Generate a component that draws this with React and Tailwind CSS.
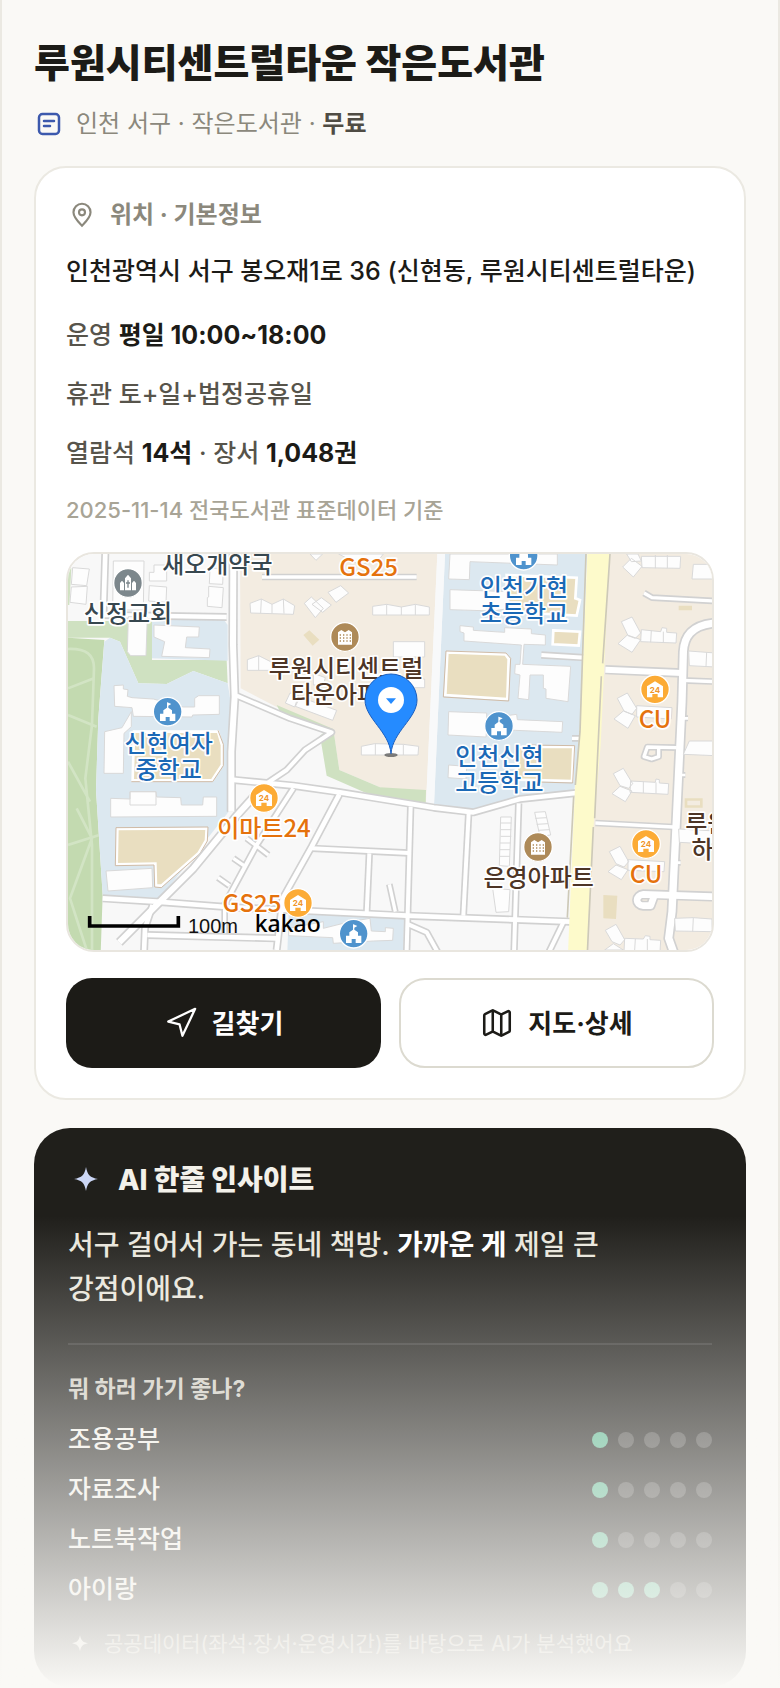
import { Map, Navigation } from 'lucide-react';

const purposes = [
  { name: '조용공부', score: 1 },
  { name: '자료조사', score: 1 },
  { name: '노트북작업', score: 1 },
  { name: '아이랑', score: 3 },
];

const roads = [
  { w: 14, d: 'M136 20 L130 215' },
  { w: 14, d: 'M130 210 L500 216' },
  { w: 18, d: 'M520 20 L519 300 L524 455 L514 620 L514 800' },
  { w: 10, d: 'M606 96 L1070 96' },
  { w: 12, d: 'M530 452 L690 520 L815 562 L735 615 L680 675 L610 722' },
  { w: 14, d: 'M514 704 L700 722 L840 742 L1122 788 L1240 802 L1380 762 L1548 744' },
  { w: 18, d: 'M604 730 L530 812 L400 970 L300 1070 L178 1192' },
  { w: 12, d: 'M700 730 L590 900 L492 1082' },
  { w: 10, d: 'M560 880 L625 930 M520 940 L552 962 M474 998 L508 1022' },
  { w: 14, d: 'M838 748 L755 905 L668 1060 L650 1215' },
  { w: 14, d: 'M128 1060 L290 1070 L500 1086 L1040 1112 L1530 1130' },
  { w: 12, d: 'M755 910 L1046 924' },
  { w: 12, d: 'M928 925 L920 1104' },
  { w: 12, d: 'M1052 785 L1040 1215' },
  { w: 12, d: 'M1226 805 L1210 1112' },
  { w: 12, d: 'M1376 775 L1362 1225' },
  { w: 14, d: 'M262 1170 L650 1180' },
  { w: 14, d: 'M278 1080 L255 1150 L252 1225' },
  { w: 10, d: 'M494 1090 L494 1165' },
  { w: 12, d: 'M1040 1136 L1100 1162 L1135 1225' },
  { w: 12, d: 'M1510 1132 L1465 1225' },
  { w: 10, d: 'M988 1018 L1006 1100' },
  { w: 12, d: 'M1444 330 L1576 338' },
  { w: 10, d: 'M1536 580 L1560 580' },
  { w: 18, d: 'M1636 374 L1866 384' },
  { w: 22, d: 'M1966 234 C1890 240 1872 280 1870 320 L1866 470 L1836 1100 L1826 1180 L1842 1225' },
  { w: 10, d: 'M1866 406 L1966 410' },
  { w: 10, d: 'M1752 144 L1776 158 L1966 168' },
  { w: 10, d: 'M1606 834 L1840 846' },
  { w: 20, d: 'M1966 1055 L1750 1048 C1726 1050 1724 1080 1750 1082 L1772 1082 L1782 1054' },
  { w: 10, d: 'M1850 608 L1762 606 L1752 635 L1775 642 L1796 635 L1796 610' },
  { w: 8, d: 'M1858 520 L1884 520 M1850 690 L1876 690 M1840 953 L1862 953' },
];

const buildings = [
  'M38 68 L88 72 L80 122 L34 118 Z M34 126 L82 124 L78 178 L30 172 Z',
  'M160 48 L252 48 L250 195 L158 195 Z',
  'M282 60 L320 60 L320 108 L268 108 L268 82 L282 82 Z M268 122 L320 126 L318 172 L266 168 Z',
  'M450 70 L490 70 L488 118 L448 116 Z M446 124 L490 128 L486 188 L442 184 L442 158 L446 156 Z',
  'M205 215 L262 215 L258 332 L212 332 L202 320 Z',
  'M282 240 L418 246 L416 276 L380 276 L376 308 L450 312 L448 338 L305 334 L314 290 L282 276 Z',
  'M162 422 L190 420 L190 432 L204 434 L202 454 L216 458 L280 462 L370 486 L404 486 L404 460 L416 452 L478 452 L478 508 L398 510 L396 516 L220 514 L216 488 L164 484 Z',
  'M134 560 L186 548 L214 500 L214 545 L192 565 L190 685 L132 685 Z',
  'M570 175 L604 162 L636 178 L670 162 L704 182 L700 208 L572 204 Z M604 162 L602 204 M636 178 L636 206 M670 162 L672 206',
  'M733 175 L754 156 L790 190 L766 218 Z M756 178 L784 158 L814 180 L788 202 Z M804 142 L842 122 L866 144 L828 172 Z',
  'M750 27 L768 46 L788 27 Z M836 27 L900 60 L960 40 L970 27 Z',
  'M562 344 L596 332 L632 350 L664 340 L664 376 L562 376 Z M596 332 L596 376',
  'M938 184 L980 178 L1024 186 L1066 178 L1108 186 L1108 210 L938 210 Z M980 178 L980 210 M1024 186 L1024 210 M1066 178 L1066 210',
  'M1000 290 L1094 290 L1094 336 L1000 336 Z M1030 402 L1094 402 L1094 428 L1030 428 Z',
  'M690 444 L716 452 L704 486 L676 474 Z M720 456 L830 496 L818 526 L706 484 Z M760 385 L796 398 L790 420 L760 420 Z',
  'M904 604 L944 596 L1030 598 L1076 604 L1074 630 L904 630 Z M946 596 L946 630 M1030 598 L1030 630',
  'M152 760 L210 762 L210 740 L288 740 L290 756 L362 758 L364 780 L428 780 L430 756 L470 756 L470 814 L152 816 Z M210 740 L288 740 L288 780 L210 780 Z',
  'M138 978 L276 970 L278 1028 L144 1038 Z',
  'M1170 27 L1492 27 L1492 60 L1230 50 L1228 104 L1166 102 Z',
  'M1170 134 L1350 140 L1350 190 L1300 198 L1170 194 Z',
  'M1200 242 L1240 246 L1240 256 L1334 262 L1334 248 L1414 252 L1414 266 L1456 270 L1456 300 L1392 298 L1388 358 L1532 364 L1524 470 L1458 460 L1458 432 L1450 430 L1450 390 L1410 390 L1406 464 L1374 460 L1380 390 L1364 386 L1366 358 L1380 358 L1384 300 L1212 288 L1212 264 L1200 260 Z',
  'M1166 500 L1280 504 L1280 520 L1370 508 L1372 524 L1508 530 L1506 562 L1366 556 L1280 552 L1278 576 L1164 570 Z',
  'M1166 660 L1220 664 L1218 702 L1164 698 Z',
  'M1688 66 L1714 40 L1746 64 L1720 96 Z M1700 27 L1734 27 L1744 48 L1714 50 Z M1744 34 L1862 34 L1860 70 L1746 68 Z M1786 30 L1786 70 M1822 30 L1822 70',
  'M1900 58 L1966 58 L1966 102 L1896 102 Z',
  'M1684 230 L1716 216 L1742 264 L1726 280 L1704 272 Z M1674 296 L1702 270 L1742 284 L1716 322 Z M1744 254 L1802 260 L1806 248 L1820 250 L1820 262 L1850 264 L1848 294 L1742 290 Z M1774 256 L1772 292 M1810 260 L1810 292',
  'M1886 318 L1966 324 L1966 366 L1888 362 Z M1940 322 L1938 364',
  'M1672 460 L1702 444 L1730 490 L1716 508 L1692 498 Z M1662 522 L1690 498 L1726 512 L1704 550 Z M1730 482 L1836 488 L1834 522 L1730 516 Z',
  'M1888 588 L1966 588 L1966 632 L1870 628 Z',
  'M1660 686 L1690 670 L1718 716 L1706 730 L1680 722 Z M1656 746 L1680 724 L1716 738 L1696 770 Z M1712 708 L1786 712 L1788 702 L1798 704 L1798 714 L1826 716 L1824 748 L1710 742 Z M1750 710 L1750 744 M1788 712 L1788 746',
  'M1648 920 L1680 904 L1706 950 L1692 966 L1668 956 Z M1644 980 L1668 960 L1704 974 L1684 1004 Z M1704 944 L1814 950 L1812 980 L1704 976 Z',
  'M1856 852 L1966 858 L1966 898 L1858 892 Z',
  'M1844 1120 L1900 1118 L1956 1122 L1956 1160 L1846 1158 Z M1900 1118 L1898 1160',
  'M1636 1156 L1668 1138 L1694 1184 L1680 1200 L1656 1190 Z M1634 1215 L1660 1196 L1690 1215 Z M1694 1180 L1750 1182 L1756 1172 L1770 1174 L1770 1184 L1802 1186 L1800 1222 L1692 1220 Z M1726 1182 L1724 1215 M1762 1182 L1762 1215',
  'M1322 816 L1354 816 L1348 964 L1318 962 Z M1322 834 H1354 M1322 854 H1354 M1322 874 H1354 M1320 894 H1352 M1320 914 H1350 M1320 934 H1350',
  'M1424 802 L1456 800 L1472 870 L1440 874 Z M1426 820 L1460 818 M1430 838 L1464 836 M1434 856 L1468 854',
  'M1298 1030 L1350 1034 L1346 1100 L1308 1102 Z',
  'M686 1150 L790 1130 L790 1150 L870 1130 L930 1120 L934 1158 L976 1160 L976 1148 L1000 1150 L998 1186 L940 1188 L820 1195 L818 1178 L686 1172 Z',
];

const halo = { stroke: '#fff', strokeWidth: 10, strokeLinejoin: 'round', paintOrder: 'stroke' };

function Label({ x, y, lines, fill }) {
  return (
    <text
      {...halo}
      fill={fill}
      fontSize="72"
      textAnchor="middle"
      className="font-['Noto_Sans_CJK_KR',sans-serif] font-medium"
    >
      {lines.map((line, i) => (
        <tspan key={line} x={x} y={y + i * 78}>{line}</tspan>
      ))}
    </text>
  );
}

function SchoolMark({ x, y }) {
  return (
    <g transform={`translate(${x} ${y})`}>
      <circle r="43" fill="#4f93cd" stroke="#fff" strokeWidth="4" />
      <path d="M-1 -28 L11 -23 L2 -18 V-12 L13 -4 V6 H23 V28 H6 V16 H-6 V28 H-23 V6 H-13 V-4 L-2 -12 V-28 Z" fill="#fff" />
    </g>
  );
}

function StoreMark({ x, y }) {
  return (
    <g transform={`translate(${x} ${y})`}>
      <circle r="43" fill="#fcab35" stroke="#fff" strokeWidth="4" />
      <path d="M0 -24 L24 -9 V24 H8 V14 H-8 V24 H-24 V-9 Z" fill="#fff" />
      <text y="10" textAnchor="middle" fontSize="24" fill="#f0962a" className="font-[Inter,sans-serif] font-bold">24</text>
    </g>
  );
}

function ApartmentMark({ x, y }) {
  return (
    <g transform={`translate(${x} ${y})`}>
      <circle r="43" fill="#ae8a58" stroke="#fff" strokeWidth="4" />
      <path d="M-21 -14 L-11 -21 L0 -14 L11 -21 L21 -14 V23 H-21 Z" fill="#fff" />
      <path d="M-16 -6 H18 M-16 3 H18 M-16 12 H18" stroke="#ae8a58" strokeWidth="4" strokeDasharray="4 6" />
    </g>
  );
}

function LibraryMap() {
  return (
    <svg
      viewBox="24 27 1932 1188"
      preserveAspectRatio="xMidYMid slice"
      className="block h-full w-full"
      role="img"
      aria-label="도서관 위치 지도"
    >
      <rect x="-400" y="0" width="2800" height="1300" fill="#f8f8f8" />
      {/* park */}
      <path d="M24 228 H276 V345 H500 L503 415 L400 378 L320 417 L235 415 L180 290 L150 278 H24 Z" fill="#cfe1c1" />
      <path d="M24 62 L34 70 L28 180 L24 180 Z" fill="#cfe1c1" />
      <path d="M24 278 L133 285 L115 520 L108 735 L128 1050 L122 1225 H24 Z" fill="#c3dab0" />
      <path d="M24 312 C80 310 102 330 102 370 L96 540 L76 700 L96 900 V1215 M24 430 L102 400 M24 510 L110 545 M24 900 L118 870 M50 790 L96 880 L30 1060 L80 1215 M24 650 L90 770" fill="none" stroke="#d2e4c4" strokeWidth="8" />
      {/* school grounds */}
      <path d="M276 222 H490 L503 240 V347 L276 340 Z" fill="#dce8f0" />
      <path d="M150 278 L180 290 L235 415 L320 417 L400 378 L503 415 L512 470 L506 620 L506 800 L300 1060 L128 1050 L108 735 L115 520 L133 290 Z" fill="#dce8f0" />
      <path d="M1155 27 H1580 L1562 580 L1543 735 L1380 755 L1240 795 L1122 778 Z" fill="#dce8f0" />
      <path d="M686 1100 L1032 1118 L1030 1225 H682 Z" fill="#dce8f0" />
      {/* housing blocks */}
      <path d="M540 27 H1132 L1098 776 L960 727 L838 675 L820 556 L650 486 L542 430 Z" fill="#f3ece1" />
      <path d="M650 480 L820 552 L838 675 L960 727 L1098 735 L1097 776 L920 745 L800 692 L780 572 L800 556 L660 500 Z" fill="#cfe1c1" />
      <path d="M1132 27 H1155 L1122 780 H1098 Z" fill="#f8f9fa" />
      <path d="M1652 27 H2300 V1225 H1580 L1606 600 Z" fill="#f3ece1" />
      {/* playgrounds */}
      <g fill="#e9dec0" stroke="#fff" strokeWidth="8">
        <path d="M1162 322 L1336 328 L1346 342 L1342 462 L1156 450 Z" />
        <path d="M1340 90 L1550 98 L1546 160 L1560 165 L1550 212 L1340 200 Z" />
        <path d="M1480 256 L1560 260 L1556 302 L1478 298 Z" />
        <path d="M1370 606 L1540 606 L1536 708 L1370 704 Z" />
        <path d="M222 560 H474 L486 600 L486 660 L456 706 H218 Z" />
        <path d="M172 852 L440 850 L438 886 L416 924 L304 1022 L288 1022 L286 956 L170 958 Z" />
      </g>
      <g fill="none" stroke="#d0bba6" strokeWidth="3">
        <path d="M1158 318 L1338 324 L1352 340 L1346 468 L1150 456 Z" />
        <path d="M474 556 L490 598 V662 L458 710 H214" />
        <path d="M168 848 L444 846 L442 888 L420 926 L304 1028 L284 1026 L282 960 L166 962 Z" />
        <path d="M1400 600 L1544 602 L1538 714 L1400 710" />
      </g>
      <path d="M748 256 L778 284 L758 302 L730 270 Z M1630 1050 L1672 1052 L1668 1122 L1630 1120 Z M1856 182 H1896 V196 H1856 Z M1874 760 H1928 V788 H1874 Z" fill="#e9dec0" />
      <path d="M1882 767 H1920 V781 H1882 Z" fill="#f3ece1" />
      {/* streets, casing first so that junctions stay open */}
      <g fill="none" stroke="#d1d1d1" strokeLinejoin="round">
        {roads.map((road) => <path key={road.d} d={road.d} strokeWidth={road.w + 10} />)}
      </g>
      <g fill="none" stroke="#fff" strokeLinejoin="round">
        {roads.map((road) => <path key={road.d} d={road.d} strokeWidth={road.w} />)}
      </g>
      <path d="M1582 27 H1648 L1622 600 L1600 850 L1580 1225 H1524 L1546 700 L1562 520 Z" fill="#fdfacb" />
      <path d="M1578 27 L1560 560 L1546 720 M1541 755 L1522 1118 M1650 27 L1628 355 M1624 394 L1604 820 M1600 846 L1582 1225" fill="none" stroke="#cdc9b8" strokeWidth="5" />
      <g fill="#fdfdfd" stroke="#d9d9d9" strokeWidth="3" strokeLinejoin="round">
        {buildings.map((d) => <path key={d} d={d} />)}
      </g>

      <g transform="translate(204 114)">
        <circle r="43" fill="#7c878c" stroke="#fff" strokeWidth="4" />
        <path d="M-24 22 V0 L-18 -7 L-12 0 V22 Z M-9 22 V-14 L0 -25 L9 -14 V22 Z M12 22 V0 L18 -7 L24 0 V22 Z" fill="#fff" />
        <path d="M0 -8 V14 M-6 0 H6" stroke="#7c878c" strokeWidth="4" />
      </g>
      <ApartmentMark x={855} y={276} />
      <ApartmentMark x={1434} y={906} />
      <SchoolMark x={323} y={500} />
      <SchoolMark x={1391} y={32} />
      <SchoolMark x={1317} y={543} />
      <SchoolMark x={881} y={1166} />
      <StoreMark x={1785} y={433} />
      <StoreMark x={1758} y={897} />
      <StoreMark x={612} y={759} />
      <StoreMark x={714} y={1074} />

      <Label x={472} y={84} lines={['새오개약국']} fill="#37474f" />
      <Label x={204} y={231} lines={['신정교회']} fill="#37474f" />
      <Label x={926} y={92} lines={['GS25']} fill="#e5720d" />
      <Label x={858} y={395} lines={['루원시티센트럴', '타운아파트']} fill="#4d3526" />
      <Label x={326} y={620} lines={['신현여자', '중학교']} fill="#1b69b6" />
      <Label x={1392} y={152} lines={['인천가현', '초등학교']} fill="#1b69b6" />
      <Label x={1318} y={660} lines={['인천신현', '고등학교']} fill="#1b69b6" />
      <Label x={1785} y={549} lines={['CU']} fill="#e5720d" />
      <Label x={1758} y={1015} lines={['CU']} fill="#e5720d" />
      <Label x={612} y={877} lines={['이마트24']} fill="#e5720d" />
      <Label x={576} y={1102} lines={['GS25']} fill="#e5720d" />
      <Label x={1436} y={1022} lines={['은영아파트']} fill="#4d3526" />
      <Label x={1942} y={860} lines={['루원']} fill="#4d3526" />
      <Label x={1928} y={938} lines={['하']} fill="#4d3526" />

      {/* selected library */}
      <ellipse cx="993" cy="630" rx="20" ry="6" fill="#4b4b4b" opacity=".7" />
      <path d="M993 626 C988 560 915 520 915 465 A78 78 0 0 1 1071 465 C1071 520 998 560 993 626 Z" fill="#258bff" stroke="#1a5fc0" strokeWidth="3" />
      <circle cx="993" cy="465" r="39" fill="#fff" />
      <path d="M978 460 H1008 L993 477 Z" fill="#258bff" />

      <path d="M89 1113 V1143 H355 V1113" fill="none" stroke="#000" strokeWidth="11" />
      <text x="384" y="1165" fontSize="60" fill="#111" className="font-['Liberation_Sans',sans-serif]">100m</text>
      <text x="584" y="1161" fontSize="69" fill="#000" className="font-['Noto_Sans',sans-serif] font-medium">kakao</text>
    </svg>
  );
}

function Sparkle({ className }) {
  return (
    <svg viewBox="0 0 36 36" className={className} fill="currentColor" aria-hidden="true">
      <path d="M18 5 C19.5 13 22 15.500 30 17 C22 18.500 19.500 21 18 29 C16.500 21 14 18.500 6 17 C14 15.500 16.500 13 18 5 Z" />
    </svg>
  );
}

function ScoreDots({ score }) {
  return (
    <span className="flex gap-[10px]" role="img" aria-label={`5점 중 ${score}점`}>
      {[1, 2, 3, 4, 5].map((n) => (
        <span key={n} className={`size-4 rounded-full ${n <= score ? 'bg-[#5bb790]' : 'bg-white/20'}`} />
      ))}
    </span>
  );
}

function PlaceCard() {
  return (
    <section className="mt-6 rounded-[32px] border-2 border-[#ebe9e2] bg-white p-[30px]">
      <h2 className="flex items-center gap-3 text-2xl leading-[34px] font-bold text-[#8b887c]">
        <svg viewBox="-3 -3 30 30" className="size-8" fill="none" stroke="currentColor" strokeWidth="2" aria-hidden="true">
          <path d="M20 9.500 C20 14.500 15.500 18.500 12 22 C8.500 18.500 4 14.500 4 9.500 A8 8 0 0 1 20 9.500 Z" />
          <circle cx="12" cy="9.500" r="2.800" />
        </svg>
        위치 · 기본정보
      </h2>
      <p className="mt-[18px] text-[25px] leading-[42px] font-medium">
        인천광역시 서구 봉오재1로 36 (신현동, 루원시티센트럴타운)
      </p>
      <div className="mt-6 flex flex-col gap-5 text-[25px] leading-[39px] font-medium text-[#57544b]">
        <p>운영 <b className="text-[#1c1b17]">평일 10:00~18:00</b></p>
        <p>휴관 토+일+법정공휴일</p>
        <p>열람석 <b className="text-[#1c1b17]">14석</b> · 장서 <b className="text-[#1c1b17]">1,048권</b></p>
      </div>
      <p className="mt-[19px] text-[22px] leading-9 font-medium text-[#a8a496]">2025-11-14 전국도서관 표준데이터 기준</p>
      <div className="mt-6 h-[400px] overflow-hidden rounded-[28px] border-2 border-[#e9e6df]">
        <LibraryMap />
      </div>
      <div className="mt-[26px] grid grid-cols-2 gap-[18px] text-[26px] font-bold">
        <button className="flex h-[90px] items-center justify-center gap-[14px] rounded-[26px] bg-[#1c1b17] text-white">
          <Navigation className="size-[34px]" strokeWidth={1.6} />
          길찾기
        </button>
        <button className="flex h-[90px] items-center justify-center gap-[14px] rounded-[26px] border-2 border-[#dcdad0] bg-white">
          <Map className="size-[34px]" strokeWidth={1.8} />
          지도·상세
        </button>
      </div>
    </section>
  );
}

function InsightCard() {
  return (
    <section className="mt-7 rounded-[36px] bg-[#201f1b] px-[34px] pt-8 pb-7 text-[#f3f1ea]">
      <h2 className="flex items-center gap-[14px] text-[28px] leading-10 font-extrabold">
        <Sparkle className="size-9 text-[#cbd6f5]" />
        AI 한줄 인사이트
      </h2>
      <p className="mt-[23px] text-[28px] leading-[44px] font-medium break-keep text-[#e9e6dc]">
        서구 걸어서 가는 동네 책방. <b className="text-white">가까운 게</b> 제일 큰 강점이에요.
      </p>
      <hr className="mt-8 border-t-2 border-white/10" />
      <h3 className="mt-7 text-[23px] leading-8 font-bold text-[#cfccc2]">뭐 하러 가기 좋나?</h3>
      <ul className="mt-[10px]">
        {purposes.map((p) => (
          <li key={p.name} className="flex h-[50px] items-center justify-between text-[25px] font-medium">
            {p.name}
            <ScoreDots score={p.score} />
          </li>
        ))}
      </ul>
      <p className="mt-[14px] flex items-center gap-3 text-[21px] leading-[30px] text-[#a8a496]">
        <Sparkle className="size-6 text-[#e0ddd3]" />
        공공데이터(좌석·장서·운영시간)를 바탕으로 AI가 분석했어요
      </p>
    </section>
  );
}

export default function App() {
  return (
    <main className="relative min-h-screen border-x-2 border-[#ebe9e2] bg-[#faf9f6] px-8 pt-9 font-[Inter,'Noto_Sans_CJK_KR',sans-serif] text-[#1c1b17]">
      <h1 className="text-[39px] leading-[54px] font-extrabold">루원시티센트럴타운 작은도서관</h1>
      <div className="mt-4 flex items-center gap-3 text-2xl leading-9 text-[#8b887c]">
        <svg viewBox="0 0 30 30" className="size-[30px]" fill="none" stroke="#3c59ad" strokeWidth="2.500" strokeLinecap="round" aria-hidden="true">
          <rect x="5" y="5" width="20" height="20" rx="3.500" />
          <path d="M10 12 H20 M10 17 H16" />
        </svg>
        <p>
          인천 서구 · 작은도서관 · <span className="font-semibold text-[#4f4c44]">무료</span>
        </p>
      </div>
      <PlaceCard />
      <InsightCard />
      <div className="pointer-events-none absolute inset-x-[-2px] bottom-0 h-[472px] bg-linear-to-b from-[#faf9f6]/0 to-[#faf9f6]" />
    </main>
  );
}
